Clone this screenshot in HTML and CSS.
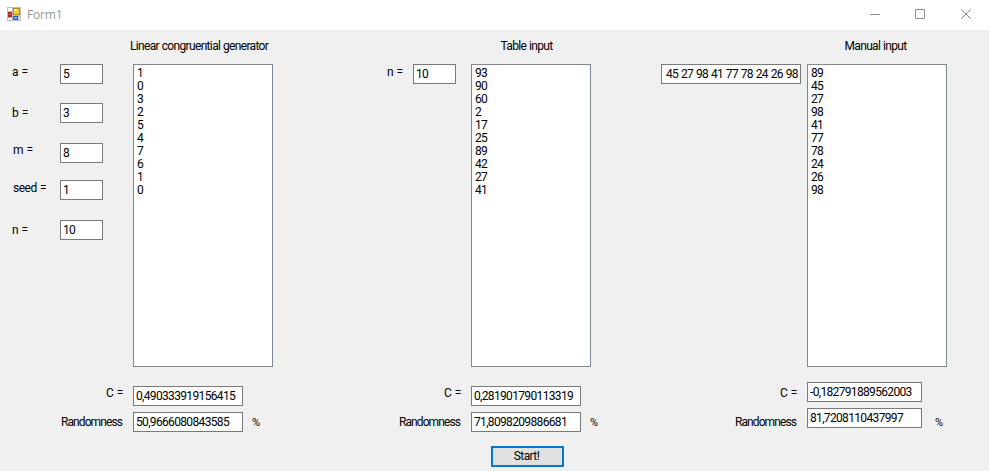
FILE: index.html
```html
<!DOCTYPE html>
<html lang="en">
<head>
<meta charset="utf-8">
<title>Form1</title>
<link rel="stylesheet" href="styles.css">
</head>
<body>
<header class="titlebar">
  <svg class="app-icon" width="14" height="14" viewBox="0 0 14 14" shape-rendering="crispEdges">
    <path fill="#bdbdbd" d="M0 0h14v14H0z"/>
    <path fill="#fff" d="M1 1h4v3H1zM1 11h4v2H1zM12 10h1v3h-1z"/>
    <path fill="#b32416" d="M1 5h4v5H1z"/>
    <path fill="#e0523c" d="M2 6h2v2H2z"/>
    <path fill="#c48a00" d="M6 1h7v7H6z"/>
    <path fill="#fac830" d="M7 2h5v5H7z"/>
    <path fill="#ffe88a" d="M7 2h3v2H7z"/>
    <path fill="#2c62c9" d="M6 9h5v4H6z"/>
    <path fill="#72a5f5" d="M7 10h3v2H7z"/>
  </svg>
  <span class="window-title">Form1</span>
  <svg class="window-buttons" width="102" height="10" viewBox="0 0 102 10" fill="none" stroke="#8c8c8c">
    <path d="M0 5.500h10M45.500 .5h9v9h-9zM91.300 .3l9.400 9.400M100.700 .3l-9.400 9.400"/>
  </svg>
</header>
<main class="form">
  <div class="panels">
    <section class="panel panel-lcg">
      <h2 class="heading">Linear congruential generator</h2>
      <div class="side params">
        <div class="param"><label>a =</label><span class="box">5</span></div>
        <div class="param param-b"><label>b =</label><span class="box">3</span></div>
        <div class="param param-m"><label>m =</label><span class="box">8</span></div>
        <div class="param param-seed"><label>seed =</label><span class="box">1</span></div>
        <div class="param param-n"><label>n =</label><span class="box">10</span></div>
      </div>
      <ul class="list"><li>1</li><li>0</li><li>3</li><li>2</li><li>5</li><li>4</li><li>7</li><li>6</li><li>1</li><li>0</li></ul>
      <div class="labels"><label>C =</label><label class="tight">Randomness</label></div>
      <div class="results"><span class="box">0,490333919156415</span><span class="box">50,9666080843585</span></div>
      <span class="percent">%</span>
    </section>
    <section class="panel panel-table">
      <h2 class="heading">Table input</h2>
      <div class="side inline"><label>n =</label><span class="box">10</span></div>
      <ul class="list"><li>93</li><li>90</li><li>60</li><li>2</li><li>17</li><li>25</li><li>89</li><li>42</li><li>27</li><li>41</li></ul>
      <div class="labels"><label>C =</label><label class="tight">Randomness</label></div>
      <div class="results"><span class="box">0,281901790113319</span><span class="box">71,8098209886681</span></div>
      <span class="percent">%</span>
    </section>
    <section class="panel panel-manual">
      <h2 class="heading">Manual input</h2>
      <div class="side"><span class="box series">45 27 98 41 77 78 24 26 98</span></div>
      <ul class="list"><li>89</li><li>45</li><li>27</li><li>98</li><li>41</li><li>77</li><li>78</li><li>24</li><li>26</li><li>98</li></ul>
      <div class="labels"><label>C =</label><label class="tight">Randomness</label></div>
      <div class="results"><span class="box">-0,182791889562003</span><span class="box">81,7208110437997</span></div>
      <span class="percent">%</span>
    </section>
  </div>
  <button class="start" type="button">Start!</button>
</main>
</body>
</html>
```
FILE: styles.css
```css
* { box-sizing: border-box; margin: 0; padding: 0; }
body {
  width: 989px; height: 471px; overflow: hidden;
  background: #f0f0f0; color: #000;
  font: 12px/13px Roboto, "Liberation Sans", sans-serif;
  letter-spacing: -0.4px;
}
.titlebar {
  display: flex; align-items: center;
  height: 30px; padding: 0 18px 2px 7px; background: #fff;
}
.window-title {
  flex: 1; margin-left: 6px; color: #999;
  font: 12px/16px "Open Sans", "Noto Sans", sans-serif; letter-spacing: -0.2px;
  padding-top: 2px;
}
.window-buttons { margin-right: -1px; }
.form { height: 441px; }
.panels { display: flex; height: 416px; }
.panel {
  position: relative;
  display: grid; flex: none;
  grid-template-rows: 34px 303px 79px;
}
.panel-lcg { grid-template-columns: 133px 140px; }
.panel-table { grid-template-columns: 198px 120px; }
.panel-manual { grid-template-columns: 216px 140px; }
.heading {
  grid-column: 2; padding-top: 10px; margin: 0 -10px;
  font-size: 12px; font-weight: 400; text-align: center; white-space: nowrap;
  letter-spacing: -0.66px; word-spacing: 0.4px;
}
.panel-lcg .heading { margin-right: -4px; }
.panel-table .heading { margin-right: 0; margin-left: -9px; }
.panel-manual .heading { margin-right: -7px; }
.panel-lcg .heading { text-align: left; padding-left: 7px; }
label { word-spacing: 0.8px; }
.tight { letter-spacing: -0.9px; padding-right: 1px; }
.box {
  display: block; height: 20px; padding: 3px 2px;
  overflow: hidden; white-space: nowrap;
  background: #fff; border: 1px solid #7a7a7a;
  letter-spacing: -0.66px;
}
.param { display: flex; height: 20px; padding-left: 12px; }
.param label { width: 48px; padding-top: 2px; }
.param .box, .inline .box { width: 43px; }
.param-b { margin-top: 19px; }
.param-b label { padding-top: 4px; }
.param-m { margin-top: 20px; padding-left: 13px; }
.param-m label { width: 47px; padding-top: 1px; }
.param-seed { margin-top: 17px; padding-left: 13px; }
.param-seed label { width: 47px; letter-spacing: -0.5px; }
.param-n { margin-top: 20px; }
.param-n label { padding-top: 4px; }
.inline { display: flex; justify-content: flex-end; padding-right: 15px; }
.inline label { width: 26px; padding-top: 2px; }
.series { width: 140px; margin-left: 70px; padding-left: 4px; letter-spacing: -0.7px; word-spacing: 0.6px; }
.list {
  list-style: none; padding: 2px 3px;
  background: #fff; border: 1px solid #828790;
  letter-spacing: -0.7px;
}
.labels {
  display: flex; flex-direction: column; gap: 16px;
  padding: 20px 10px 0 0; text-align: right;
}
.results { display: flex; flex-direction: column; gap: 6px; padding-top: 19px; width: 110px; }
.panel-manual .results { width: 115px; padding-top: 15px; }
.percent { position: absolute; left: calc(100% - 21px); top: 386px; font-size: 11px; }
.panel-table .percent { left: calc(100% - 1px); }
.panel-manual .percent { left: calc(100% - 12px); }
.start {
  display: block; width: 73px; height: 21px; margin-left: 491px; padding-right: 2px;
  font: inherit; letter-spacing: -0.6px; color: #000;
  background: #e1e1e1; border: 2px solid #0078d7;
}
```
